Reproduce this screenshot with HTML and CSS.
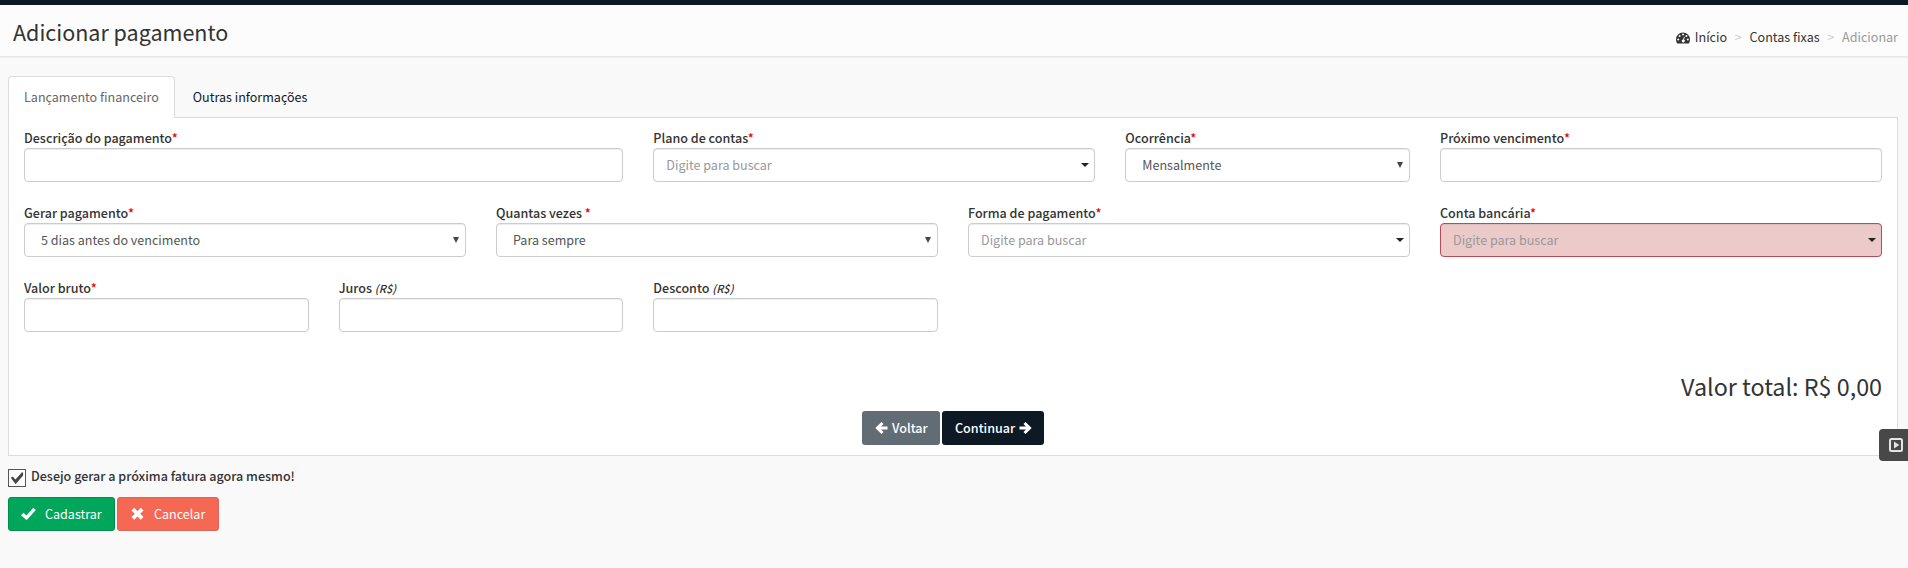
FILE: index.html
```html
<!DOCTYPE html>
<html lang="pt-BR">
<head>
<meta charset="utf-8">
<title>Adicionar pagamento</title>
<link rel="stylesheet" href="styles.css">
</head>
<body>
<div class="topbar"></div>
<header class="page-header">
  <h1>Adicionar pagamento</h1>
  <nav class="breadcrumb">
    <svg class="gauge" viewBox="0 0 14 12"><path fill="#333" d="M7 .5a7 7 0 0 0-7 7c0 1.400.4 2.600 1 3.700.1.200.3.300.5.300h11c.2 0 .4-.1.500-.3.600-1.100 1-2.300 1-3.700a7 7 0 0 0-7-7z"/><g fill="#fcfcfc"><circle cx="2.200" cy="7.500" r="1"/><circle cx="3.600" cy="4" r="1"/><circle cx="7" cy="2.600" r="1"/><circle cx="10.400" cy="4" r="1"/><circle cx="11.800" cy="7.500" r="1"/><path d="M8 4.700l.8.200-.7 2.700a1.500 1.500 0 1 1-.9-.200z"/></g></svg>
    <a>Início</a><span class="sep">&gt;</span><a>Contas fixas</a><span class="sep">&gt;</span><span class="current">Adicionar</span>
  </nav>
</header>
<main>
  <div class="tabs"><a class="tab active">Lançamento financeiro</a><a class="tab">Outras informações</a></div>
  <section class="panel">
    <div class="fields">
      <div class="field w4"><label>Descrição do pagamento<b>*</b></label><div class="control"></div></div>
      <div class="field w3"><label>Plano de contas<b>*</b></label><div class="control combo"><span>Digite para buscar</span><i class="caret"></i></div></div>
      <div class="field w2"><label>Ocorrência<b>*</b></label><div class="control select"><span>Mensalmente</span><i class="arrow"></i></div></div>
      <div class="field w3"><label>Próximo vencimento<b>*</b></label><div class="control"></div></div>
      <div class="field w3"><label>Gerar pagamento<b>*</b></label><div class="control select"><span>5 dias antes do vencimento</span><i class="arrow"></i></div></div>
      <div class="field w3"><label>Quantas vezes <b>*</b></label><div class="control select"><span>Para sempre</span><i class="arrow"></i></div></div>
      <div class="field w3"><label>Forma de pagamento<b>*</b></label><div class="control combo"><span>Digite para buscar</span><i class="caret"></i></div></div>
      <div class="field w3"><label>Conta bancária<b>*</b></label><div class="control combo error"><span>Digite para buscar</span><i class="caret"></i></div></div>
      <div class="field w2"><label>Valor bruto<b>*</b></label><div class="control"></div></div>
      <div class="field w2"><label>Juros <em>(R$)</em></label><div class="control"></div></div>
      <div class="field w2"><label>Desconto <em>(R$)</em></label><div class="control"></div></div>
    </div>
    <div class="total">Valor total: R$ 0,00</div>
    <div class="steps">
      <a class="btn back"><svg viewBox="0 0 13 14"><path d="M7.500 2L2.500 7l5 5M3 7h9.500" fill="none" stroke="#fff" stroke-width="3"/></svg><span>Voltar</span></a>
      <a class="btn next"><span>Continuar</span><svg viewBox="0 0 13 14"><path d="M5.500 2l5 5-5 5M10 7H.5" fill="none" stroke="#fff" stroke-width="3"/></svg></a>
    </div>
  </section>
  <div class="check-row"><span class="checkbox"><svg viewBox="0 0 16 16"><path fill="#484848" d="M1.800 7.800l2-1.300 2.600 3 6.800-7.400.9 1v2.400l-7.500 8.700z"/></svg></span><label>Desejo gerar a próxima fatura agora mesmo!</label></div>
  <div class="actions">
    <a class="btn save"><svg viewBox="0 0 15 14"><path fill="#fff" d="M0 8.200l2.500-2.400 3 2.700L12.300.8l2.500 2.300-8.500 9.500-1.200.1z"/></svg><span>Cadastrar</span></a>
    <a class="btn cancel"><svg viewBox="0 0 13 14"><path fill="#fff" d="M3.200.8l3.300 3.400L9.800.8l2.700 2.700-3.300 3.300 3.300 3.300-2.700 2.700-3.300-3.400-3.300 3.400L.5 10.100l3.300-3.300L.5 3.500z"/></svg><span>Cancelar</span></a>
  </div>
</main>
<a class="side-button"><svg viewBox="0 0 14 14"><rect x="1" y="1" width="12" height="12" rx="1.500" fill="none" stroke="#e4e4e4" stroke-width="2"/><path fill="#e4e4e4" d="M5 3.500v7L10.300 7z"/></svg></a>
</body>
</html>
```
FILE: styles.css
```css
* { box-sizing: border-box; }
body {
  margin: 0;
  height: 568px;
  overflow: hidden;
  background: #f9f9f9;
  color: #333;
  font: 12.55px/20px "Noto Sans CJK JP", sans-serif;
  white-space: nowrap;
}
svg { display: block; flex: none; }
.topbar { height: 5px; background: #0d1a26; }
.page-header {
  display: flex;
  justify-content: space-between;
  height: 52px;
  padding: 12px 10px 0 13px;
  background: #fcfcfc;
  border-bottom: 1px solid #e6e6e6;
  box-shadow: 0 1px 1px rgba(0, 0, 0, .04);
}
h1 { margin: 0; font-size: 21.5px; font-weight: 400; line-height: 30px; }
.breadcrumb { display: flex; padding-top: 10px; color: #333; }
.gauge { width: 14px; height: 12px; margin: 5px 5px 0 0; }
.sep { width: 22.5px; text-align: center; color: #ccc; font-size: 12.5px; }
.current { color: #999; }
main { padding: 19px 10px 0 8px; }
.tabs { display: flex; height: 41px; }
.tab { height: 42px; padding: 10px 15px 0; border: 1px solid transparent; color: #0d1a26; margin-right: 2px; }
.tab.active { position: relative; z-index: 1; background: #fff; border-color: #ddd; border-bottom: 0; border-radius: 4px 4px 0 0; color: #666; }
.panel { height: 339px; padding: 10px 15px 0; background: #fff; border: 1px solid #ddd; }
.fields { display: grid; grid-template-columns: repeat(12, minmax(0, 1fr)); column-gap: 30px; grid-auto-rows: 75px; }
.w4 { grid-column: span 4; }
.w3 { grid-column: span 3; }
.w2 { grid-column: span 2; }
label { display: block; height: 20px; font-weight: 500; }
label b { color: #e00; font-weight: 500; }
label em { font-size: 11px; }
.control {
  display: flex;
  justify-content: space-between;
  height: 34px;
  padding: 6px 6px 0 12px;
  border: 1px solid #ccc;
  border-radius: 4px;
  background: #fff;
  box-shadow: inset 0 1px 1px rgba(0, 0, 0, .075);
  color: #999;
}
.control.combo { padding-right: 5px; }
.control.select { padding-left: 16px; color: #555; }
.control.error { background: #eccaca; border-color: #b94a56; }
.caret { height: 4px; margin-top: 8px; border: 4px solid transparent; border-top-color: #222; border-bottom: 0; }
.arrow { width: 6px; height: 6px; margin-top: 7px; background: #444; clip-path: polygon(0 0, 100% 0, 50% 100%); }
.total { margin-top: 17px; height: 41px; text-align: right; font-size: 23.3px; line-height: 32px; }
.steps { display: flex; justify-content: center; gap: 2px; }
.btn { display: flex; height: 34px; padding: 6px 12px 0; border: 1px solid transparent; border-radius: 3px; color: #fff; }
.back, .next { font-weight: 500; }
.back { width: 78px; background: #626c74; }
.next { width: 102px; background: #0d1a26; }
.back svg, .next svg { width: 13px; height: 14px; margin-top: 3px; }
.back svg { margin-right: 4px; }
.next svg { margin-left: 4px; }
.check-row { display: flex; height: 41px; padding-top: 13px; gap: 5px; }
.checkbox { width: 18px; height: 18px; border: 1px solid #555; background: #fff; }
.check-row label { margin-top: -3px; }
.actions { display: flex; gap: 2px; }
.save { width: 107px; background: #00a65a; border-color: #008d4c; }
.cancel { width: 102px; background: #f56954; border-color: #d9685a; padding-left: 13px; }
.save svg { width: 15px; height: 14px; margin: 3px 9px 0 0; }
.cancel svg { width: 13px; height: 14px; margin: 3px 10px 0 0; }
.side-button { position: absolute; right: 0; top: 429px; width: 29px; height: 32px; padding: 9px 0 0 10px; background: #484848; border-radius: 4px 0 0 4px; }
.side-button svg { width: 14px; height: 14px; }
```
